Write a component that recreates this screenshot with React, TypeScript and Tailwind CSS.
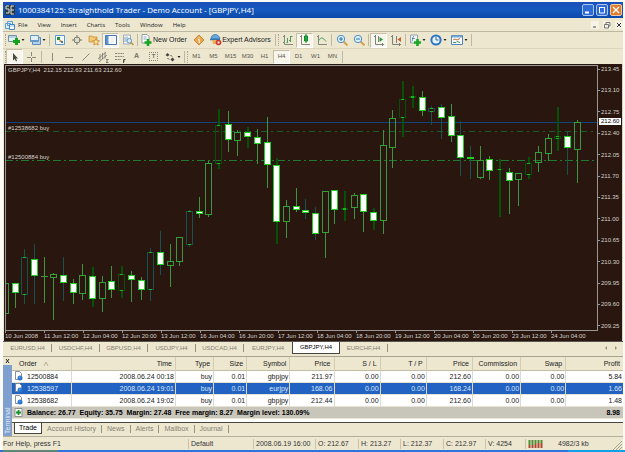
import type { ReactNode } from "react";
import clsx from "clsx";

const MENUS = ["File", "View", "Insert", "Charts", "Tools", "Window", "Help"];
const PERIODS = ["M1", "M5", "M15", "M30", "H1", "H4", "D1", "W1", "MN"];
const CHART_TABS = [
  "EURUSD,H4",
  "USDCHF,H4",
  "GBPUSD,H4",
  "USDJPY,H4",
  "USDCAD,H4",
  "EURJPY,H4",
  "GBPJPY,H4",
  "EURCHF,H4",
];
const PRICES = [
  "213.45",
  "213.10",
  "212.75",
  "212.40",
  "212.05",
  "211.70",
  "211.35",
  "211.00",
  "210.65",
  "210.30",
  "209.95",
  "209.60",
  "209.25",
];
const TIMES = [
  "10 Jun 2008",
  "11 Jun 12:00",
  "12 Jun 04:00",
  "12 Jun 20:00",
  "13 Jun 12:00",
  "16 Jun 04:00",
  "16 Jun 20:00",
  "17 Jun 12:00",
  "18 Jun 04:00",
  "18 Jun 20:00",
  "19 Jun 12:00",
  "20 Jun 04:00",
  "20 Jun 20:00",
  "23 Jun 12:00",
  "24 Jun 04:00",
];
const TERMINAL_TABS = [
  "Trade",
  "Account History",
  "News",
  "Alerts",
  "Mailbox",
  "Journal",
];

const COLUMNS = [
  { label: "Order", width: 59 },
  { label: "Time", width: 104 },
  { label: "Type", width: 38 },
  { label: "Size", width: 33 },
  { label: "Symbol", width: 43 },
  { label: "Price", width: 44 },
  { label: "S / L", width: 46 },
  { label: "T / P", width: 46 },
  { label: "Price", width: 46 },
  { label: "Commission", width: 48 },
  { label: "Swap", width: 45 },
  { label: "Profit", width: 57 },
];

const ORDERS = [
  ["12500884", "2008.06.24 00:18", "buy", "0.01", "gbpjpy", "211.97", "0.00", "0.00", "212.60", "0.00", "0.00", "5.84"],
  ["12538597", "2008.06.24 19:01", "buy", "0.01", "eurjpy", "168.06", "0.00", "0.00", "168.24", "0.00", "0.00", "1.66"],
  ["12538682", "2008.06.24 19:02", "buy", "0.01", "gbpjpy", "212.44", "0.00", "0.00", "212.60", "0.00", "0.00", "1.48"],
];

// high, body top, body bottom, low, kind (u = hollow, f = filled), tone
type Candle = [number, number, number, number, "u" | "f", Tone];
type Tone = "g" | "d" | "b";

const TONES: Record<Tone, string> = {
  g: "#3f9444",
  d: "#075007",
  b: "#17504e",
};

const CANDLES: Candle[] = [
  [283, 283, 314, 314, "u", "g"],
  [283, 283, 293, 307, "f", "g"],
  [249, 257, 295, 303, "u", "b"],
  [244, 259, 276, 303, "f", "b"],
  [257, 276, 277, 302, "u", "g"],
  [273, 274, 278, 319, "u", "g"],
  [257, 275, 283, 300, "f", "b"],
  [279, 283, 293, 303, "f", "g"],
  [264, 275, 294, 299, "u", "g"],
  [267, 276, 299, 306, "f", "d"],
  [276, 282, 299, 311, "u", "g"],
  [266, 281, 290, 297, "f", "g"],
  [266, 274, 291, 297, "u", "d"],
  [271, 275, 280, 301, "f", "g"],
  [277, 280, 290, 299, "f", "g"],
  [248, 252, 290, 300, "u", "b"],
  [231, 252, 265, 274, "f", "b"],
  [244, 261, 266, 286, "u", "g"],
  [237, 237, 262, 265, "u", "g"],
  [210, 211, 245, 246, "u", "b"],
  [197, 211, 214, 217, "f", "g"],
  [161, 163, 215, 216, "u", "g"],
  [109, 125, 164, 168, "u", "d"],
  [111, 124, 140, 151, "f", "g"],
  [130, 132, 141, 155, "u", "g"],
  [127, 132, 137, 147, "f", "d"],
  [129, 137, 144, 163, "f", "g"],
  [117, 142, 165, 187, "f", "g"],
  [158, 165, 222, 243, "f", "d"],
  [200, 206, 222, 237, "u", "g"],
  [188, 206, 210, 211, "f", "g"],
  [199, 210, 213, 218, "f", "b"],
  [207, 213, 234, 239, "f", "b"],
  [191, 191, 233, 257, "u", "g"],
  [190, 190, 210, 223, "f", "g"],
  [191, 208, 210, 220, "u", "d"],
  [193, 195, 208, 218, "u", "g"],
  [194, 194, 212, 231, "f", "g"],
  [208, 212, 221, 229, "f", "d"],
  [130, 145, 221, 233, "u", "g"],
  [110, 118, 148, 167, "u", "g"],
  [81, 99, 118, 136, "u", "d"],
  [86, 96, 98, 107, "u", "d"],
  [91, 97, 111, 115, "f", "g"],
  [106, 108, 112, 124, "u", "b"],
  [104, 107, 118, 138, "f", "b"],
  [104, 116, 136, 141, "f", "g"],
  [121, 135, 158, 175, "f", "b"],
  [146, 157, 159, 178, "f", "b"],
  [146, 160, 178, 178, "u", "g"],
  [156, 159, 171, 179, "f", "g"],
  [159, 169, 170, 216, "u", "d"],
  [168, 172, 181, 213, "f", "g"],
  [173, 173, 180, 205, "u", "g"],
  [157, 163, 175, 178, "u", "d"],
  [146, 152, 163, 171, "u", "g"],
  [134, 138, 154, 160, "u", "g"],
  [107, 136, 139, 150, "u", "d"],
  [131, 136, 148, 174, "f", "b"],
  [120, 122, 150, 182, "u", "g"],
];

function CandlePlot() {
  return (
    <svg
      viewBox="5 65 593 266"
      preserveAspectRatio="none"
      className="block h-[266px] w-full"
      shapeRendering="crispEdges"
      aria-label="GBPJPY H4 candles"
    >
      <path d="M5 122.5H597" stroke="#0f4379" />
      <path d="M5 131.5H597" stroke="#1b5c28" strokeDasharray="6 4 2 4" />
      <path d="M5 160.5H597" stroke="#1f7a34" strokeDasharray="8 3 2 3" />
      {CANDLES.map(([high, top, bottom, low, kind, tone], i) => {
        const x = Math.round(4.9 + i * 9.69);
        const color = TONES[tone];
        const wick = tone === "d" ? 2 : 1;
        return (
          <g key={i}>
            <rect x={x} y={high} width={wick} height={Math.max(top - high, 0)} fill={color} />
            <rect x={x} y={bottom} width={wick} height={Math.max(low - bottom, 0) + 1} fill={color} />
            {kind === "f" ? (
              <rect
                x={x - 2.5}
                y={top + 0.5}
                width={6}
                height={Math.max(bottom - top - 1, 1)}
                fill="#ffffff"
                stroke="#1fd01f"
              />
            ) : (
              <rect
                x={x - 2.5}
                y={top + 0.5}
                width={6}
                height={Math.max(bottom - top - 1, 0.1)}
                fill="none"
                stroke={color}
              />
            )}
            {kind === "u" && (
              <path
                d={`M${x - 1} ${top + 0.5}h3M${x - 1} ${bottom - 0.5}h3`}
                stroke="#22b022"
              />
            )}
          </g>
        );
      })}
      <path d="M5.5 331V65.5H597.5V330.5H5" fill="none" stroke="#9a9694" />
    </svg>
  );
}

function Icon({ children, wide }: { children: ReactNode; wide?: boolean }) {
  return (
    <svg
      viewBox={wide ? "0 0 17 12" : "0 0 12 12"}
      className={clsx("h-3 shrink-0", wide ? "w-[17px]" : "w-3")}
      fill="none"
    >
      {children}
      {wide && <path d="M13.5 5h3l-1.5 2z" fill="#222" />}
    </svg>
  );
}

type ToolProps = {
  label: string;
  children: ReactNode;
  wide?: boolean;
  pressed?: boolean;
};

function Tool({ label, children, wide, pressed }: ToolProps) {
  return (
    <button
      type="button"
      aria-label={label}
      aria-pressed={pressed}
      className={clsx(
        "flex h-[15px] shrink-0 items-center justify-center",
        wide ? "w-[21px]" : "w-[17px]",
        pressed && "border border-[#c5bfa8] border-r-white border-b-white bg-[#f8f5ec]"
      )}
    >
      <Icon wide={wide}>{children}</Icon>
    </button>
  );
}

function Divider() {
  return <span className="mx-px h-3 w-px shrink-0 bg-[#bdb8a2]" />;
}

function Grip() {
  return <span className="ml-px h-3 w-px shrink-0 border-l border-dotted border-[#a9a48f]" />;
}

function TitleBar() {
  return (
    <header className="flex h-4 items-center gap-[2px] bg-linear-to-b from-[#1b4fb9] via-[#1459bd] to-[#0b47ab] pr-px pl-[2px] text-white">
      <svg viewBox="0 0 10 10" className="size-[10px]" aria-hidden="true">
        <rect width="10" height="10" fill="#2c3a42" />
        <path d="M4 1H1v3h3v4H1M9 1H6v8h3M6 5h3" fill="none" stroke="#dfe6e2" />
      </svg>
      <h1 className="flex-1 pl-px font-['Open_Sans',sans-serif] text-[8px] leading-4 font-medium whitespace-nowrap">
        1000384125: Straighthold Trader - Demo Account - [GBPJPY,H4]
      </h1>
      <div className="flex gap-[2px]">
        <button type="button" aria-label="Minimize" className="size-3 rounded-[2px] border border-[#a9c2ee] bg-[#2f6bd6]">
          <svg viewBox="0 0 10 10" className="size-[10px]">
            <path d="M2 7.5h4" stroke="#fff" strokeWidth="2" />
          </svg>
        </button>
        <button type="button" aria-label="Restore" className="size-3 rounded-[2px] border border-[#a9c2ee] bg-[#2f6bd6]">
          <svg viewBox="0 0 10 10" className="size-[10px]">
            <path d="M2 2.5h6M2.5 2v6h5V2" fill="none" stroke="#fff" />
          </svg>
        </button>
        <button type="button" aria-label="Close" className="size-3 rounded-[2px] border border-[#ecc9a5] bg-[#dc7c2c]">
          <svg viewBox="0 0 10 10" className="size-[10px]">
            <path d="M2 2l6 6M8 2L2 8" stroke="#fff" strokeWidth="1.4" />
          </svg>
        </button>
      </div>
    </header>
  );
}

function MenuBar() {
  return (
    <nav className="flex h-[14px] items-center border-b border-[#bdb8a2] pl-[2px]">
      <svg viewBox="0 0 10 10" className="mr-[3px] size-[10px]" aria-hidden="true">
        <path d="M.5 3.5h5v5h-5zM2.5 1.5h5v4h-5z" fill="#dcecf8" stroke="#5b9fd2" />
        <path d="M4.5 4.5h5v5h-5z" fill="#fff" stroke="#3c87c4" />
        <path d="M5 6h4" stroke="#8bbde0" />
      </svg>
      <ul className="flex flex-1 gap-[10px] font-['Open_Sans',sans-serif] text-[6px] leading-3">
        {MENUS.map((m) => (
          <li key={m}>
            <button type="button">{m}</button>
          </li>
        ))}
      </ul>
      <div className="flex gap-1">
        <button type="button" aria-label="Minimize chart" className="size-2 bg-[#f6f3e6]">
          <svg viewBox="0 0 8 8" className="size-2">
            <path d="M2 6h3" stroke="#444" />
          </svg>
        </button>
        <button type="button" aria-label="Restore chart" className="size-2 bg-[#f6f3e6]">
          <svg viewBox="0 0 8 8" className="size-2">
            <path d="M3 3V1.500h4V5H6M1.500 3.500h4V7h-4z" fill="none" stroke="#555" strokeWidth=".8" />
          </svg>
        </button>
        <button type="button" aria-label="Close chart" className="size-2 bg-[#f6f3e6]">
          <svg viewBox="0 0 8 8" className="size-2">
            <path d="M2 2l4 4M6 2L2 6" stroke="#333" />
          </svg>
        </button>
      </div>
    </nav>
  );
}

function StandardToolbar() {
  return (
    <div className="flex h-[17px] items-center border-b border-[#ddd6bd] pl-px text-[7px]">
      <Grip />
      <Tool label="New chart" wide>
        <path d="M.5 1.500h8v6h-8z" fill="#e6f1f6" stroke="#6d93ab" />
        <path d="M1 3h7" stroke="#8fb2c6" />
        <path d="M8.500 4v7M5 7.500h7" stroke="#15a020" strokeWidth="3" />
      </Tool>
      <Tool label="Profiles" wide>
        <path d="M3.500 3.500h8v7h-8z" fill="#b5d0e8" stroke="#5d8fbd" />
        <path d="M1.500 1.500h8v6h-8z" fill="#e2eff9" stroke="#6397c4" />
        <path d="M2 6h7v1H2z" fill="#6397c4" />
      </Tool>
      <Divider />
      <Tool label="Market watch">
        <path d="M1.500 1.500h9v9h-9z" fill="#f4fafd" stroke="#5a9bc8" />
        <path d="M3 3h3v3H3z" fill="#29923a" />
        <path d="M5.500 6h2v2h-2z" fill="#e08f26" />
        <path d="M7 7h2v2H7z" fill="#4a7ab0" />
      </Tool>
      <Tool label="Data window">
        <circle cx="6" cy="6" r="3" stroke="#7e7c74" />
        <path d="M6 1v3.500M6 7.500V11M1 6h3.500M7.500 6H11" stroke="#7e7c74" />
      </Tool>
      <Tool label="Navigator">
        <path d="M1 2h3l1 1h4v5H1z" fill="#f3c876" stroke="#c38b2b" strokeWidth=".7" />
        <path d="M8 4.500l1 2.200 2.500.2-1.900 1.600.6 2.500L8 9.700 5.800 11l.6-2.500L4.500 6.900 7 6.700z" fill="#fbe3a0" stroke="#c87f25" strokeWidth=".8" />
      </Tool>
      <Tool label="Terminal" pressed>
        <path d="M.5 1.500h11v9H.5z" fill="#fff" stroke="#3f79b8" />
        <path d="M1 2h2.500v8H1z" fill="#5d93c9" />
        <path d="M5 4h5M5 6h5M5 8h4" stroke="#d5e1ec" strokeWidth=".7" />
      </Tool>
      <Tool label="Strategy tester">
        <path d="M1.500 1h7v9h-7z" fill="#f2f5f7" stroke="#8d9daa" strokeWidth=".8" />
        <path d="M3 3v5M5 2.500v5" stroke="#7ca6c6" />
        <circle cx="7.300" cy="6.800" r="2.300" fill="#d7ebf8" stroke="#6896b8" />
        <path d="M9 8.500l2.500 2.500" stroke="#c39035" strokeWidth="1.500" />
      </Tool>
      <Divider />
      <button type="button" className="flex w-[51px] items-center gap-px pl-px whitespace-nowrap">
        <Icon>
          <path d="M2 .5h5l2 2V9H2z" fill="#fff" stroke="#798894" strokeWidth=".8" />
          <path d="M3.500 3h3M3.500 5h3" stroke="#7eabc9" />
          <path d="M8 5v7M4.500 8.500h7" stroke="#19a422" strokeWidth="2.600" />
        </Icon>
        New Order
      </button>
      <Tool label="MetaEditor">
        <path d="M6 1L11 6 6 11 1 6z" fill="#eba84c" stroke="#c98236" />
        <path d="M6 3.500v.8M5 5.500h1.200V9" stroke="#fff" />
      </Tool>
      <button type="button" className="flex w-[67px] items-center justify-center whitespace-nowrap">
        <Icon>
          <path d="M1 5c0-6 8-6 9 0z" fill="#68a6db" stroke="#2d6da8" strokeWidth=".7" />
          <path d="M0 5.500h10" stroke="#2e77b3" strokeWidth="1.500" />
          <path d="M2 6h6l-1 4H3z" fill="#ecb05a" />
          <circle cx="8.500" cy="8.500" r="2.800" fill="#cb3525" />
          <path d="M7.500 7.500h2v2h-2z" fill="#fff" />
        </Icon>
        Expert Advisors
      </button>
      <Divider />
      <Grip />
      <Tool label="Bar chart">
        <path d="M2.500 1v9.500H11M1 2.500h1.500M1 8.500h1.500" stroke="#85877f" />
        <path d="M5.500 4v5M4.500 8.500h1M8.500 2v6M8.500 2.500h2M7 6.500h1.500" stroke="#4f9a60" />
      </Tool>
      <Tool label="Candlesticks" pressed>
        <path d="M2.500 1v9.500H11M1 2.500h1.500" stroke="#85877f" />
        <path d="M7 0v9" stroke="#15852d" />
        <path d="M5.500 2h3v5h-3z" fill="#20ac3b" stroke="#15852d" />
      </Tool>
      <Tool label="Line chart">
        <path d="M2.500 1v9.500H11M1 2.500h1.500" stroke="#85877f" />
        <path d="M3 6.500c2-4 4-3 7 1" stroke="#49a45d" />
      </Tool>
      <Divider />
      <Tool label="Zoom in">
        <path d="M7.500 7.500l4 4" stroke="#d4a44d" strokeWidth="2" />
        <circle cx="5" cy="5" r="3.700" fill="#dceefa" stroke="#4f91c6" />
        <path d="M3 5h4M5 3v4" stroke="#2b73ad" />
      </Tool>
      <Tool label="Zoom out">
        <path d="M7.500 7.500l4 4" stroke="#d4a44d" strokeWidth="2" />
        <circle cx="5" cy="5" r="3.700" fill="#dceefa" stroke="#4f91c6" />
        <path d="M3 5h4" stroke="#2b73ad" />
      </Tool>
      <Divider />
      <Tool label="Auto scroll" pressed>
        <path d="M2.500 1v9.500H11M1 2.500h1.500M9.500 9v3" stroke="#7b827d" />
        <path d="M5.500 2v6" stroke="#7b827d" />
        <path d="M6.500 3L10 5.500 6.500 8z" fill="#229b37" />
      </Tool>
      <Tool label="Chart shift">
        <path d="M2.500 1v9.500H11M1 2.500h1.500M9.500 9v3M6.500 2v7" stroke="#7b827d" />
        <path d="M11 3L7.500 5.500 11 8z" fill="#c4612c" />
      </Tool>
      <Divider />
      <Tool label="Indicators" wide>
        <path d="M1.500 1h7v8h-7z" fill="#eff5f6" stroke="#7e929c" strokeWidth=".8" />
        <path d="M5 2.500c-2 0-1 3-2 5M3 4.500h3" stroke="#557b91" strokeWidth=".8" />
        <path d="M8.500 5v7M5 8.500h7" stroke="#18a822" strokeWidth="2.600" />
      </Tool>
      <Tool label="Periods" wide>
        <circle cx="6" cy="6" r="4.600" fill="#e8f4fc" stroke="#2b74c4" strokeWidth="2" />
        <path d="M6 3v3h2.500" stroke="#385e80" />
      </Tool>
      <Tool label="Templates" wide>
        <path d="M.5 1.500h11v9H.5z" fill="#fbfcfb" stroke="#4e86b6" />
        <path d="M1 2.500h10" stroke="#74a9d5" strokeWidth="2" />
        <path d="M2 6l2-1 2 1 3-1.500" stroke="#c06d37" />
        <path d="M2 8.500h3l1-1 3 1" stroke="#3c9561" />
      </Tool>
      <Divider />
    </div>
  );
}

function LineToolbar() {
  return (
    <div className="flex h-[15px] items-center pl-px">
      <Grip />
      <Tool label="Cursor" pressed>
        <path d="M4 2v7.500l1.800-1.500 1.200 2.500 1-.5L7 7.500h2z" fill="#4a4944" />
      </Tool>
      <Tool label="Crosshair">
        <path d="M5.500 1v4M5.500 7v4M1 6.500h4M6 6.500h4" stroke="#8a877b" />
      </Tool>
      <Divider />
      <Tool label="Vertical line">
        <path d="M6.500 2v8" stroke="#8a877b" />
      </Tool>
      <Tool label="Horizontal line">
        <path d="M2 6.500h8" stroke="#8a877b" />
      </Tool>
      <Tool label="Trendline">
        <path d="M2.500 9.500l7-7" stroke="#8a877b" />
      </Tool>
      <Tool label="Channel">
        <path d="M1 8l8-7M2 11l8-7M3 3v6M5.500 2v6M8 1.500v6" stroke="#77756c" strokeWidth=".8" />
        <path d="M9 8.500h2.500M9 10h2M9 11.500h2.500" stroke="#333" strokeWidth=".6" />
      </Tool>
      <Tool label="Fibonacci">
        <path d="M1 2.500h9M1 5.500h9M1 8.500h6" stroke="#8a877b" strokeDasharray="2 .7" />
        <path d="M9.500 12V8.500h2M9.500 10h1.500" stroke="#333" strokeWidth=".8" />
      </Tool>
      <button type="button" className="w-[17px] text-[7px] font-bold text-[#77756c]">
        A
      </button>
      <button type="button" className="flex w-[17px] justify-center text-[6px] font-bold text-[#77756c]">
        <span className="size-[9px] border border-dotted border-[#8a877b] leading-[7px]">T</span>
      </button>
      <Tool label="Arrows" wide>
        <path d="M1.500 4l2-2 2 2-2 1.500zM6.500 8.500l2-2 2 2-2 2z" fill="#45443f" />
        <path d="M3.500 7l1.500 1.500M6.500 4l1.500 1.500" stroke="#45443f" />
      </Tool>
      <Divider />
      <Grip />
      {PERIODS.map((p) => (
        <button
          key={p}
          type="button"
          aria-pressed={p === "H4"}
          className={clsx(
            "h-[14px] w-[17px] text-center text-[6px] text-[#57554d]",
            p === "H4" && "border border-[#c5bfa8] border-r-white border-b-white bg-[#f8f5ec]"
          )}
        >
          {p}
        </button>
      ))}
      <Divider />
    </div>
  );
}

function Chart() {
  return (
    <main className="relative ml-px flex border-r border-[#d8d3c4] bg-[#29170f] text-[6px] text-[#d5d0cc]">
      <div className="min-w-0 flex-1 pt-px pl-px">
        <CandlePlot />
        <div className="flex h-[10px] pr-2 leading-[10px]">
          {TIMES.map((t) => (
            <span key={t} className="relative flex-1 whitespace-nowrap">
              <i className="absolute -top-px left-0 h-[3px] w-px bg-[#9a9694]" />
              {t}
            </span>
          ))}
        </div>
      </div>
      <div className="flex w-6 flex-col justify-between pt-px pb-[11px] leading-[8px]">
        {PRICES.map((p) => (
          <span key={p} className="flex items-center gap-px">
            <i className="h-px w-[2px] bg-[#9a9694]" />
            {p}
          </span>
        ))}
      </div>
      <p className="absolute top-[2px] left-1 leading-[8px] whitespace-pre">
        GBPJPY,H4  212.15 212.63 211.63 212.60
      </p>
      <p className="absolute top-[60px] left-1 leading-[8px]">#12538682 buy</p>
      <p className="absolute top-[89px] left-1 leading-[8px]">#12500884 buy</p>
      <p className="absolute top-[54px] right-px w-[22px] bg-white pl-[2px] leading-[7px] text-black">
        212.60
      </p>
    </main>
  );
}

function ChartTabs() {
  return (
    <div className="flex h-[15px] items-start border-t border-[#5a5751] pl-px text-[6px] text-[#858173]">
      {CHART_TABS.map((tab) => (
        <button
          key={tab}
          type="button"
          className={clsx(
            "w-12 text-center",
            tab === "GBPJPY,H4"
              ? "h-3 border border-t-0 border-[#4a4741] bg-white text-black"
              : "my-[2px] h-2 border-r border-[#98937f] leading-[8px]",
            tab === "EURJPY,H4" && "border-r-0"
          )}
        >
          {tab}
        </button>
      ))}
      <div className="ml-auto flex gap-1 pr-1">
        <button type="button" aria-label="Scroll tabs left">
          <svg viewBox="0 0 6 12" className="h-3 w-[6px]">
            <path d="M4 4v4L2 6z" fill="#98937f" />
          </svg>
        </button>
        <button type="button" aria-label="Scroll tabs right">
          <svg viewBox="0 0 6 12" className="h-3 w-[6px]">
            <path d="M2 4v4l2-2z" fill="#98937f" />
          </svg>
        </button>
      </div>
    </div>
  );
}

function OrderIcon() {
  return (
    <svg viewBox="0 0 9 10" className="h-[10px] w-[9px] shrink-0" aria-hidden="true">
      <path d="M1.500 .5h4l2 2v6h-6z" fill="#fff" stroke="#77838c" strokeWidth=".9" />
      <circle cx="6" cy="7" r="2.500" fill="#2877cf" />
      <path d="M5.300 6.200h1" stroke="#9dc8f2" />
    </svg>
  );
}

function Terminal() {
  return (
    <section className="flex border-t border-[#a9a48f]">
      <aside className="flex w-[9px] flex-col">
        <button type="button" aria-label="Close terminal" className="h-2">
          <svg viewBox="0 0 9 8" className="h-2 w-[9px]">
            <path d="M3 2l3 4M6 2L3 6" stroke="#222" />
          </svg>
        </button>
        <span className="flex flex-1 rotate-180 items-center bg-[#7f9fce] pt-[2px] text-[7px] leading-[9px] text-[#e4ecf7] [writing-mode:vertical-rl]">
          Terminal
        </span>
      </aside>
      <div className="min-w-0 flex-1">
        <table className="w-full table-fixed border-collapse bg-white text-right text-[7px] leading-[11px] text-[#222]">
          <colgroup>
            {COLUMNS.map((c, i) => (
              <col key={i} style={{ width: c.width }} />
            ))}
          </colgroup>
          <thead>
            <tr className="h-[13px] border-b border-[#c2bca5] bg-[#ede7d0]">
              {COLUMNS.map((c, i) => (
                <th
                  key={i}
                  scope="col"
                  className={clsx(
                    "border-r border-[#d3ccb3] p-0 pr-[3px] font-normal last:border-r-0",
                    i === 0 && "pl-[7px] text-left"
                  )}
                >
                  {c.label}
                  {i === 0 && (
                    <svg viewBox="0 0 6 6" className="ml-[6px] inline size-[6px]">
                      <path d="M1 5l2-4 2 4" fill="none" stroke="#aaa48e" strokeWidth=".8" />
                    </svg>
                  )}
                </th>
              ))}
            </tr>
          </thead>
          <tbody>
            {ORDERS.map((row, r) => (
              <tr
                key={row[0]}
                className={clsx(
                  "h-3 border-b border-[#e6e2d4]",
                  r === 1 && "bg-[#2162c2] text-[#dbe7f8]"
                )}
              >
                {row.map((cell, i) => (
                  <td
                    key={i}
                    className={clsx(
                      "border-r border-[#dedace] p-0 pr-px last:border-r-0",
                      i === 11 && "pr-[3px]"
                    )}
                  >
                    {i === 0 ? (
                      <span className="flex items-center gap-1 pl-[2px]">
                        <OrderIcon />
                        {cell}
                      </span>
                    ) : (
                      cell
                    )}
                  </td>
                ))}
              </tr>
            ))}
          </tbody>
          <tfoot>
            <tr className="h-3 bg-[#c8c5bb] font-bold text-black">
              <td colSpan={11} className="p-0 text-left">
                <span className="flex items-center gap-1 pl-[2px] whitespace-pre">
                  <svg viewBox="0 0 9 9" className="size-[9px]" aria-hidden="true">
                    <path d="M1 .5h7v8H1z" fill="#fff" stroke="#8b938c" />
                    <path d="M4.500 2v5M2 4.500h5" stroke="#17902a" strokeWidth="1.800" />
                  </svg>
                  Balance: 26.77  Equity: 35.75  Margin: 27.48  Free margin: 8.27  Margin level: 130.09%
                </span>
              </td>
              <td className="p-0 pr-[3px]">8.98</td>
            </tr>
          </tfoot>
        </table>
        <div className="flex h-[14px] items-start border-t border-[#4a4741] shadow-[0_-3px_0_white] mt-1 text-[7px] leading-[10px] text-[#858173]">
          {TERMINAL_TABS.map((tab, i) => (
            <button
              key={tab}
              type="button"
              className={
                i === 0
                  ? "ml-[2px] h-[11px] w-7 border border-t-0 border-[#4a4741] bg-white text-black"
                  : "my-[2px] h-2 border-r border-[#98937f] px-[5px] leading-[8px]"
              }
            >
              {tab}
            </button>
          ))}
        </div>
      </div>
    </section>
  );
}

function StatusBar() {
  return (
    <footer className="flex h-[14px] items-center border-t border-[#b5b09b] pr-px text-[7px] leading-[10px] whitespace-nowrap text-[#333]">
      <span className="flex-1">For Help, press F1</span>
      <span className="w-[65px] border-l border-[#c9c3ab] pl-[2px]">Default</span>
      <span className="w-[62px] border-l border-[#c9c3ab] pl-[2px]">2008.06.19 16:00</span>
      <span className="w-[43px] border-l border-[#c9c3ab] pl-[2px]">O: 212.67</span>
      <span className="w-[42px] border-l border-[#c9c3ab] pl-[2px]">H: 213.27</span>
      <span className="w-[43px] border-l border-[#c9c3ab] pl-[2px]">L: 212.37</span>
      <span className="w-[42px] border-l border-[#c9c3ab] pl-[2px]">C: 212.97</span>
      <span className="w-10 border-l border-[#c9c3ab] pl-[2px]">V: 4254</span>
      <span className="flex w-[87px] items-center gap-[15px] border-l border-[#c9c3ab] pl-[2px]">
        <svg viewBox="0 0 15 8" className="h-2 w-[15px]" aria-hidden="true">
          <path d="M1.500 0v5M4.500 0v5M7.500 0v4M10.500 0v3M13.500 0v3" stroke="#4f8d32" strokeWidth="2" />
          <path d="M1.500 5v3M4.500 5v3M7.500 4v4M10.500 3v5M13.500 3v5" stroke="#ad4630" strokeWidth="2" />
        </svg>
        4982/3 kb
      </span>
      <svg viewBox="0 0 10 12" className="h-3 w-[10px]" aria-hidden="true">
        <path d="M1 12L10 3M4 12l6-6M7 12l3-3" stroke="#a9a48f" />
      </svg>
    </footer>
  );
}

export default function App() {
  return (
    <div className="bg-[#fbfaf5] pt-[2px] font-['Liberation_Sans',Arial,sans-serif] text-[#222]">
      <div className="mr-[2px] ml-[3px] bg-[#ede7d0]">
        <TitleBar />
        <MenuBar />
        <StandardToolbar />
        <LineToolbar />
        <Chart />
        <ChartTabs />
        <Terminal />
        <StatusBar />
      </div>
      <div className="flex h-[2px] bg-[#2a74dc]">
        <span className="ml-[3px] w-[55px] bg-[#5f8579]" />
        <span className="ml-auto w-[57px] bg-[#12a0e8]" />
      </div>
    </div>
  );
}
